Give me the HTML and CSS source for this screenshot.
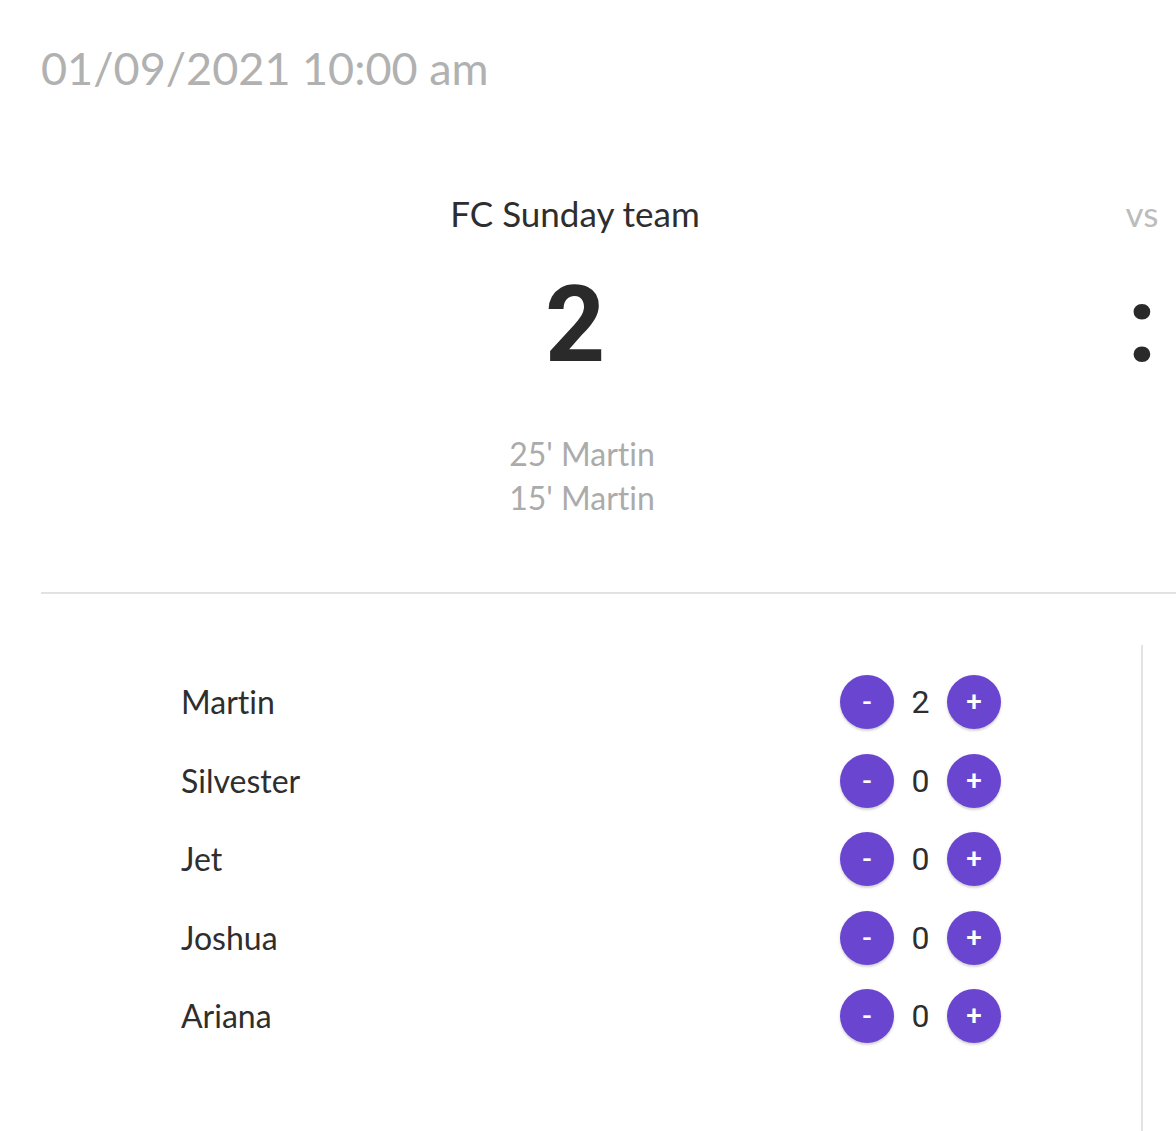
FILE: index.html
```html
<!DOCTYPE html>
<html lang="en">
<head>
<meta charset="utf-8">
<title>Match</title>
<link rel="stylesheet" href="styles.css">
</head>
<body>
<div class="page">
  <div class="date">01/09/2021 10:00 am</div>
  <div class="match">
    <div class="team">
      <div class="team-name">FC Sunday team</div>
      <div class="score">2</div>
      <ul class="goals">
        <li>25' Martin</li>
        <li>15' Martin</li>
      </ul>
    </div>
    <div class="versus">
      <div class="vs">vs</div>
      <div class="colon">:</div>
    </div>
  </div>
  <div class="divider"></div>
  <div class="lineup">
    <ul class="players">
      <li class="player"><span class="player-name">Martin</span><span class="counter"><button class="btn">-</button><span class="count">2</span><button class="btn">+</button></span></li>
      <li class="player"><span class="player-name">Silvester</span><span class="counter"><button class="btn">-</button><span class="count">0</span><button class="btn">+</button></span></li>
      <li class="player"><span class="player-name">Jet</span><span class="counter"><button class="btn">-</button><span class="count">0</span><button class="btn">+</button></span></li>
      <li class="player"><span class="player-name">Joshua</span><span class="counter"><button class="btn">-</button><span class="count">0</span><button class="btn">+</button></span></li>
      <li class="player"><span class="player-name">Ariana</span><span class="counter"><button class="btn">-</button><span class="count">0</span><button class="btn">+</button></span></li>
    </ul>
    <div class="sep"></div>
  </div>
</div>
</body>
</html>
```

FILE: styles.css
```css
html, body {
  margin: 0;
  padding: 0;
  background: #ffffff;
  overflow: hidden;
}

body {
  font-family: Lato, "Noto Sans", sans-serif;
  font-variant-ligatures: none;
  color: #333333;
}

.page {
  padding: 41px 0 0 41px;
}

.date {
  font-size: 45px;
  line-height: 55px;
  color: #b1b1b1;
}

.match {
  display: grid;
  grid-template-columns: 1068px 66px;
  margin-top: 98px;
}

.team {
  text-align: center;
}

.team-name {
  font-size: 35px;
  line-height: 38px;
  color: #2e2e2e;
}

.score {
  font-family: Roboto, "Liberation Sans", sans-serif;
  font-weight: 700;
  font-size: 105px;
  line-height: 1;
  margin-top: 41px;
  color: #2a2a2a;
}

.goals {
  list-style: none;
  margin: 54px 0 0;
  padding: 0 0 0 14px;
  font-size: 32px;
  line-height: 44px;
  color: #ababab;
}

.versus {
  text-align: center;
}

.vs {
  font-size: 35px;
  line-height: 38px;
  color: #bcbcbc;
}

.colon {
  font-family: Roboto, "Liberation Sans", sans-serif;
  font-weight: 700;
  font-size: 105px;
  line-height: 1;
  margin-top: 41px;
  color: #2a2a2a;
}

.divider {
  height: 2px;
  background: #e2e2e2;
  margin-top: 72px;
}

.lineup {
  display: grid;
  grid-template-columns: 1068px 66px;
  margin-top: 51px;
  height: 520px;
}

.players {
  list-style: none;
  margin: 0;
  padding: 18px 108px 0 140px;
}

.player {
  display: flex;
  align-items: center;
  height: 78.5px;
}

.player-name {
  flex: 1;
  font-size: 32px;
  line-height: 38px;
  color: #2e2e2e;
}

.counter {
  display: flex;
  align-items: center;
}

.btn {
  width: 54px;
  height: 54px;
  border: none;
  border-radius: 50%;
  padding: 0;
  margin: 0;
  background: #6a45cf;
  color: #ffffff;
  font-family: Roboto, "Liberation Sans", sans-serif;
  font-weight: 500;
  font-size: 28px;
  line-height: 54px;
  box-shadow: 0 2px 2px rgba(0, 0, 0, 0.12), 0 1px 4px rgba(0, 0, 0, 0.08);
}

.count {
  width: 53px;
  text-align: center;
  font-family: Roboto, "Liberation Sans", sans-serif;
  font-size: 32px;
  color: #2e2e2e;
}

.sep {
  width: 2px;
  background: #e4e4e4;
  justify-self: center;
}
```
